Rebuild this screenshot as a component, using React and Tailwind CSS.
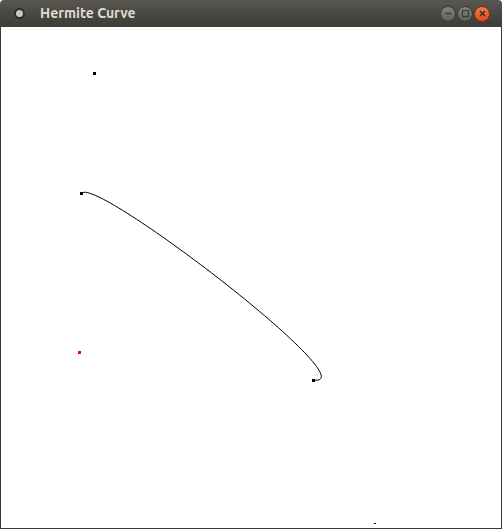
import React from "react";

const TitleButton = ({ kind }) => {
  const isClose = kind === "close";
  return (
    <div
      className={`flex h-[16px] w-[16px] items-center justify-center rounded-full border ${
        isClose
          ? "border-[#8a2f14] bg-gradient-to-b from-[#f37a4e] to-[#de4a1a]"
          : "border-[#3a3a36] bg-gradient-to-b from-[#85847f] to-[#5e5d59]"
      }`}
    >
      <svg width="9" height="9" viewBox="0 0 9 9">
        {kind === "min" && <line x1="1.5" y1="4.5" x2="7.5" y2="4.5" stroke="#3c3b37" strokeWidth="1.4" />}
        {kind === "max" && <rect x="1.5" y="1.5" width="6" height="6" fill="none" stroke="#3c3b37" strokeWidth="1.2" />}
        {isClose && (
          <path d="M2 2 L7 7 M7 2 L2 7" stroke="#3c2a20" strokeWidth="1.4" />
        )}
      </svg>
    </div>
  );
};

const App = () => {
  return (
    <div className="flex h-[529px] w-[502px] flex-col" style={{ fontFamily: "Ubuntu, 'Noto Sans', 'DejaVu Sans', sans-serif" }}>
      <div className="flex h-[27px] shrink-0 items-center rounded-t-[4px] bg-gradient-to-b from-[#57564f] to-[#3c3b37] pl-[14px] pr-[12px]">
        <div className="flex h-[11px] w-[11px] items-center justify-center rounded-full bg-[#2e2d2a]">
          <div className="h-[7px] w-[7px] rounded-full bg-[#c9c7c0]" />
        </div>
        <span className="ml-[15px] text-[14px] font-semibold text-[#dfdbd2]">Hermite Curve</span>
        <div className="ml-auto flex items-center gap-[1px]">
          <TitleButton kind="min" />
          <TitleButton kind="max" />
          <TitleButton kind="close" />
        </div>
      </div>
      <div className="flex-1 border-x border-b border-[#3c3b37] bg-white">
        <svg width="500" height="501" viewBox="1 27 500 501" className="block">
          <rect x="93" y="72" width="3" height="3" fill="#000" />
          <rect x="80" y="192" width="3" height="3" fill="#000" />
          <rect x="312" y="379" width="3" height="3" fill="#000" />
          <rect x="78" y="351" width="3" height="3" fill="#ff0000" />
          <rect x="374" y="523" width="2" height="1" fill="#000" />
          <path
            d="M82 193 C 98 178, 372 388, 313 380"
            fill="none"
            stroke="#000"
            strokeWidth="1"
          />
        </svg>
      </div>
    </div>
  );
};

export default App;
